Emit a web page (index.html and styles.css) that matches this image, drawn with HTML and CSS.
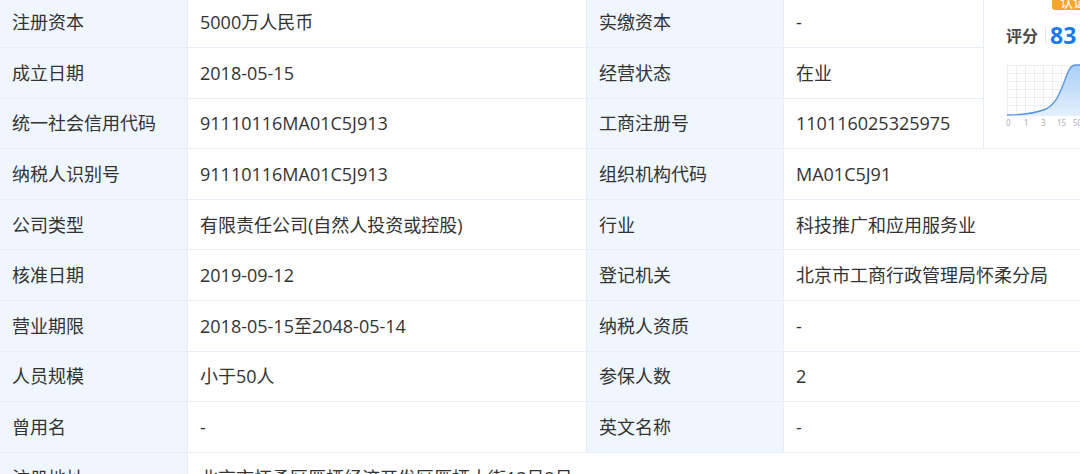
FILE: index.html
```html
<!DOCTYPE html>
<html lang="zh-CN">
<head>
<meta charset="utf-8">
<title>工商信息</title>
<link rel="stylesheet" href="styles.css">
</head>
<body>
<div class="info-grid">
  <div class="cell label">注册资本</div>
  <div class="cell value">5000万人民币</div>
  <div class="cell label">实缴资本</div>
  <div class="cell value">-</div>
  <div class="cell score">
    <div class="badge">认证</div>
    <div class="score-head">
      <span class="score-title">评分</span>
      <span class="score-sep"></span>
      <span class="score-num">83</span>
    </div>
    <svg class="chart" width="92" height="72" viewBox="0 0 92 72">
      <defs>
        <linearGradient id="fillg" x1="0" y1="0" x2="0" y2="1">
          <stop offset="0" stop-color="#a9cff7"/>
          <stop offset="1" stop-color="#e4f0fd"/>
        </linearGradient>
      </defs>
      <g stroke="#eceef1" stroke-width="1">
        <line x1="3" y1="7.5" x2="92" y2="7.5"/>
        <line x1="3" y1="15.5" x2="92" y2="15.5"/>
        <line x1="3" y1="23.5" x2="92" y2="23.5"/>
        <line x1="3" y1="31.5" x2="92" y2="31.5"/>
        <line x1="3" y1="39.5" x2="92" y2="39.5"/>
        <line x1="3" y1="47.5" x2="92" y2="47.5"/>
        <line x1="3.5" y1="7" x2="3.5" y2="57"/>
        <line x1="12.5" y1="7" x2="12.5" y2="57"/>
        <line x1="21.5" y1="7" x2="21.5" y2="57"/>
        <line x1="30.5" y1="7" x2="30.5" y2="57"/>
        <line x1="39.5" y1="7" x2="39.5" y2="57"/>
        <line x1="48.5" y1="7" x2="48.5" y2="57"/>
        <line x1="57.5" y1="7" x2="57.5" y2="57"/>
        <line x1="66.5" y1="7" x2="66.5" y2="57"/>
        <line x1="75.5" y1="7" x2="75.5" y2="57"/>
        <line x1="84.5" y1="7" x2="84.5" y2="57"/>
      </g>
      <path d="M3 57 C20 57 32 55 42 51 C52 46 55 36 59 27 C63 17 65 8 71 7 L92 7 L92 58 L3 58 Z" fill="url(#fillg)"/>
      <path d="M3 57 C20 57 32 55 42 51 C52 46 55 36 59 27 C63 17 65 8 71 7 L92 7" fill="none" stroke="#5b95e6" stroke-width="1.4"/>
      <g class="axis" fill="#a9b0b8" font-size="8">
        <text x="2" y="68">0</text>
        <text x="20" y="68">1</text>
        <text x="37" y="68">3</text>
        <text x="53" y="68">15</text>
        <text x="69" y="68">50</text>
      </g>
    </svg>
  </div>

  <div class="cell label">成立日期</div>
  <div class="cell value">2018-05-15</div>
  <div class="cell label">经营状态</div>
  <div class="cell value">在业</div>

  <div class="cell label">统一社会信用代码</div>
  <div class="cell value">91110116MA01C5J913</div>
  <div class="cell label">工商注册号</div>
  <div class="cell value">110116025325975</div>

  <div class="cell label">纳税人识别号</div>
  <div class="cell value">91110116MA01C5J913</div>
  <div class="cell label">组织机构代码</div>
  <div class="cell value wide">MA01C5J91</div>

  <div class="cell label">公司类型</div>
  <div class="cell value">有限责任公司(自然人投资或控股)</div>
  <div class="cell label">行业</div>
  <div class="cell value wide">科技推广和应用服务业</div>

  <div class="cell label">核准日期</div>
  <div class="cell value">2019-09-12</div>
  <div class="cell label">登记机关</div>
  <div class="cell value wide">北京市工商行政管理局怀柔分局</div>

  <div class="cell label">营业期限</div>
  <div class="cell value">2018-05-15至2048-05-14</div>
  <div class="cell label">纳税人资质</div>
  <div class="cell value wide">-</div>

  <div class="cell label">人员规模</div>
  <div class="cell value">小于50人</div>
  <div class="cell label">参保人数</div>
  <div class="cell value wide">2</div>

  <div class="cell label">曾用名</div>
  <div class="cell value">-</div>
  <div class="cell label">英文名称</div>
  <div class="cell value wide">-</div>

  <div class="cell label">注册地址</div>
  <div class="cell value full">北京市怀柔区雁栖经济开发区雁栖大街13号2号</div>
</div>
</body>
</html>
```

FILE: styles.css
```css
html, body {
  margin: 0;
  padding: 0;
  background: #ffffff;
  overflow: hidden;
}

body {
  font-family: "Open Sans", "Noto Sans CJK SC", sans-serif;
  color: #333333;
}

.info-grid {
  display: grid;
  grid-template-columns: 188px 399px 197px 200px 96px;
  grid-auto-rows: 50.6px;
  margin-top: -2.6px;
  width: 1080px;
}

.cell {
  box-sizing: border-box;
  display: flex;
  align-items: center;
  padding: 0 12px;
  font-size: 18px;
  line-height: 1;
  white-space: nowrap;
  overflow: hidden;
  border-bottom: 1px solid #e6edf5;
  border-right: 1px solid #e6edf5;
}

.label {
  background: #eff6fd;
}

.value {
  background: #ffffff;
}

.wide {
  grid-column: span 2;
  border-right: none;
}

.full {
  grid-column: span 4;
  border-right: none;
}

.score {
  grid-row: span 3;
  position: relative;
  display: block;
  padding: 0;
  border-right: none;
  overflow: hidden;
}

.badge {
  position: absolute;
  top: -3px;
  right: -14px;
  background: #f7a531;
  color: #ffffff;
  font-family: "Noto Sans CJK SC", sans-serif;
  font-size: 13px;
  line-height: 16px;
  padding: 0 8px;
  border-radius: 3px;
}

.score-head {
  display: flex;
  align-items: center;
  margin: 25px 0 0 22px;
  height: 26px;
}

.score-title {
  font-family: "Noto Sans CJK SC", sans-serif;
  font-size: 16px;
  font-weight: 700;
  color: #4a4a4a;
}

.score-sep {
  width: 1px;
  height: 17px;
  background: #e3e6ea;
  margin: 0 4px 0 7px;
}

.score-num {
  font-family: "Open Sans", "Noto Sans", sans-serif;
  font-size: 23px;
  font-weight: 700;
  color: #1a7ae8;
}

.chart {
  display: block;
  margin: 10px 0 0 20px;
}

.axis text {
  font-family: "Noto Sans", sans-serif;
}
```
